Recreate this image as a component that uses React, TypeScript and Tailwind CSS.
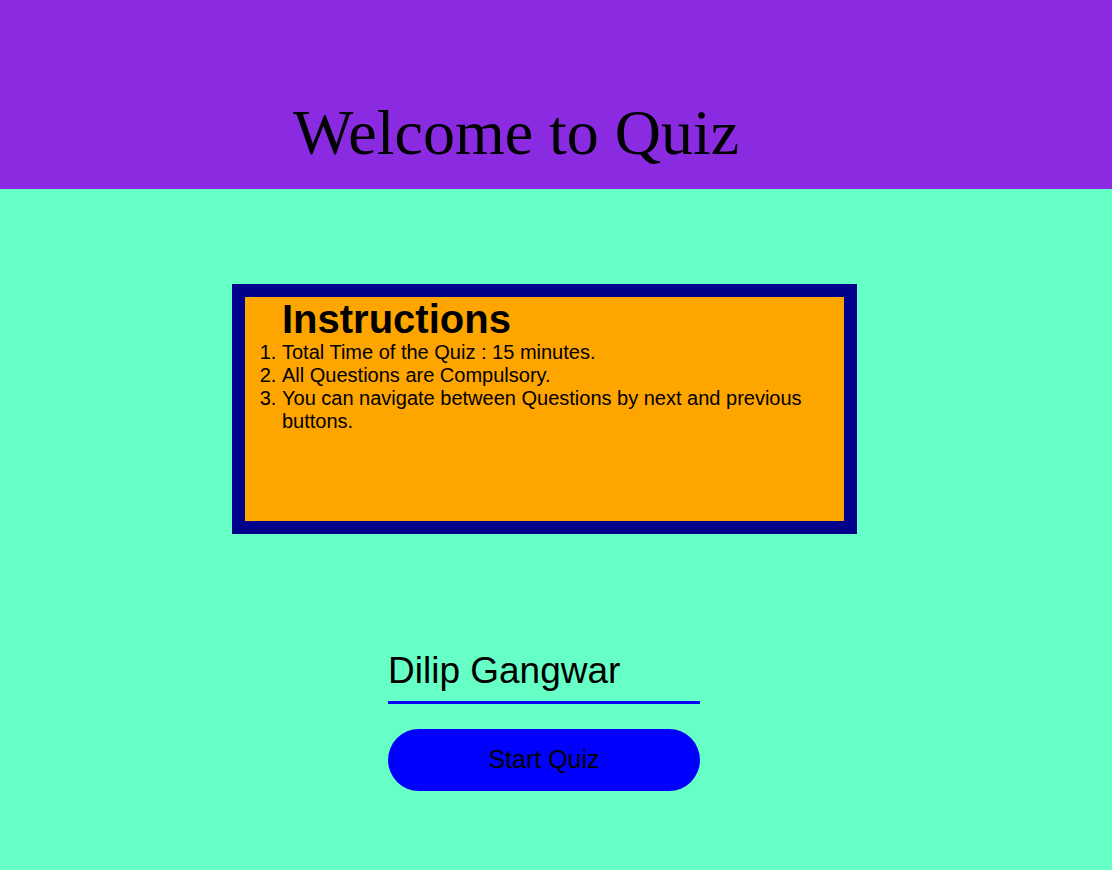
import React from "react";

export default function App() {
  return (
    <div className="min-h-[870px] w-full bg-[#66ffc6]" style={{ fontFamily: '"Liberation Sans", Arial, sans-serif' }}>
      <header className="h-[189px] bg-[#8a2be2] pt-[96px] pl-[293px]">
        <h1
          className="text-[64px] leading-[74px] font-normal text-black"
          style={{ fontFamily: '"Liberation Serif", "Times New Roman", serif' }}
        >
          Welcome to Quiz
        </h1>
      </header>

      <div className="flex flex-col items-start pl-[232px] pt-[95px]">
        <div className="w-[625px] h-[250px] border-[13px] border-[#00008b] bg-[#ffa500] text-black">
          <h2 className="pl-[37px] pt-[1px] text-[40px] leading-[43px] font-bold">Instructions</h2>
          <ol className="list-decimal pl-[37px] pr-[20px] text-[20px] leading-[23px]">
            <li>Total Time of the Quiz : 15 minutes.</li>
            <li>All Questions are Compulsory.</li>
            <li>You can navigate between Questions by next and previous buttons.</li>
          </ol>
        </div>
      </div>

      <div className="flex flex-col items-start pl-[388px] pt-[116px]">
        <input
          type="text"
          defaultValue="Dilip Gangwar"
          className="w-[312px] bg-transparent text-[37px] leading-[41px] pb-[10px] border-b-[3px] border-[#0000ff] outline-none text-black"
        />
        <button className="mt-[25px] w-[312px] h-[62px] rounded-full bg-[#0000ff] text-black text-[25px]">
          Start Quiz
        </button>
      </div>
    </div>
  );
}
